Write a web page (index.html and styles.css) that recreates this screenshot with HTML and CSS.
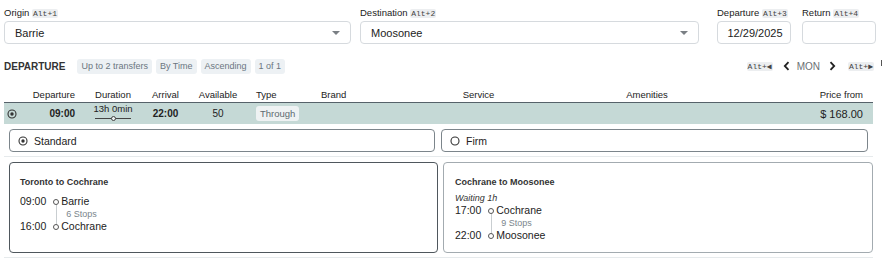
FILE: index.html
```html
<!DOCTYPE html>
<html lang="en">
<head>
    <meta charset="UTF-8">
    <title>Departure</title>
    <link rel="stylesheet" href="styles.css">
</head>
<body>
<div class="page">
    <div class="search">
        <div class="field f_origin">
            <label>Origin <kbd>Alt+1</kbd></label>
            <div class="box">Barrie<span class="caret"></span></div>
        </div>
        <div class="field f_dest">
            <label>Destination <kbd>Alt+2</kbd></label>
            <div class="box">Moosonee<span class="caret"></span></div>
        </div>
        <div class="field f_dep">
            <label>Departure <kbd>Alt+3</kbd></label>
            <div class="box date">12/29/2025</div>
        </div>
        <div class="field f_ret">
            <label>Return <kbd>Alt+4</kbd></label>
            <div class="box date"></div>
        </div>
    </div>

    <div class="toolbar">
        <span class="title">DEPARTURE</span>
        <span class="chip">Up to 2 transfers</span>
        <span class="chip">By Time</span>
        <span class="chip">Ascending</span>
        <span class="chip">1 of 1</span>
        <div class="nav">
            <kbd>Alt+◀</kbd>
            <svg class="chev prev" width="7" height="10" viewBox="0 0 7 10"><polyline points="5.5,1.2 1.8,5 5.5,8.8" fill="none" stroke="#222" stroke-width="1.8"/></svg>
            <span class="day">MON</span>
            <svg class="chev next" width="7" height="10" viewBox="0 0 7 10"><polyline points="1.5,1.2 5.2,5 1.5,8.8" fill="none" stroke="#222" stroke-width="1.8"/></svg>
            <kbd>Alt+▶</kbd>
        </div>
        <span class="tick"></span>
    </div>

    <div class="table">
        <div class="thead">
            <span></span>
            <span class="r">Departure</span>
            <span class="c">Duration</span>
            <span class="c">Arrival</span>
            <span class="c">Available</span>
            <span class="l">Type</span>
            <span class="l2">Brand</span>
            <span class="c">Service</span>
            <span class="c">Amenities</span>
            <span class="p">Price from</span>
        </div>
        <div class="trow">
            <span class="radio_cell">
                <svg width="10" height="10" viewBox="0 0 10 10"><circle cx="5" cy="5" r="4" fill="none" stroke="#333" stroke-width="1.1"/><circle cx="5" cy="5" r="1.7" fill="#333"/></svg>
            </span>
            <span class="r bold">09:00</span>
            <span class="dur">
                <span>13h 0min</span>
                <i class="dur_line"><b></b></i>
            </span>
            <span class="c bold">22:00</span>
            <span class="c">50</span>
            <span class="l"><span class="tag">Through</span></span>
            <span></span>
            <span></span>
            <span></span>
            <span class="p price">$ 168.00</span>
        </div>
    </div>

    <div class="options">
        <div class="opt opt_a">
            <svg width="10" height="10" viewBox="0 0 10 10"><circle cx="5" cy="5" r="4" fill="none" stroke="#333" stroke-width="1.1"/><circle cx="5" cy="5" r="1.7" fill="#333"/></svg>
            Standard
        </div>
        <div class="opt opt_b">
            <svg width="10" height="10" viewBox="0 0 10 10"><circle cx="5" cy="5" r="4" fill="none" stroke="#333" stroke-width="1.1"/></svg>
            Firm
        </div>
    </div>
    <div class="rule"></div>

    <div class="cards">
        <div class="card card_sel">
            <div class="card_title">Toronto to Cochrane</div>
            <div class="tl first">
                <span class="t">09:00</span><span class="mk mk_start"><b></b></span><span class="n">Barrie</span>
                <span></span><span class="mk mk_mid"></span><span class="stops">6 Stops</span>
                <span class="t">16:00</span><span class="mk mk_end"><b></b></span><span class="n">Cochrane</span>
            </div>
        </div>
        <div class="card card_b">
            <div class="card_title">Cochrane to Moosonee</div>
            <div class="wait">Waiting 1h</div>
            <div class="tl">
                <span class="t">17:00</span><span class="mk mk_start"><b></b></span><span class="n">Cochrane</span>
                <span></span><span class="mk mk_mid"></span><span class="stops">9 Stops</span>
                <span class="t">22:00</span><span class="mk mk_end"><b></b></span><span class="n">Moosonee</span>
            </div>
        </div>
    </div>
    <div class="rule"></div>
</div>
</body>
</html>
```
FILE: styles.css
```css
body{
    margin: 0;
    font-family: "Liberation Sans", Arial, sans-serif;
    color: #222;
    background: #fff;
}
.page{
    padding-left: 4px;
}

kbd{
    font-family: "Liberation Mono", "DejaVu Sans Mono", monospace;
    font-size: 8px;
    background-color: #eceef0;
    color: #444;
    border-radius: 2px;
    padding: 0 1px;
}

/* search fields */
.search{
    display: flex;
    padding-top: 6px;
}
.field label{
    display: block;
    font-size: 9.5px;
    line-height: 13px;
    margin-bottom: 1px;
}
.f_origin{ width: 347px; }
.f_dest{ width: 339px; margin-left: 9px; }
.f_dep{ width: 74px; margin-left: 18px; }
.f_ret{ width: 74px; margin-left: 11px; }

.box{
    height: 23px;
    box-sizing: border-box;
    border: 1px solid #d6dade;
    border-radius: 4px;
    font-size: 11px;
    padding-left: 10px;
    display: flex;
    justify-content: space-between;
    align-items: center;
}
.box.date{
    justify-content: center;
    padding-left: 2px;
}
.caret{
    width: 0;
    height: 0;
    border-left: 4px solid transparent;
    border-right: 4px solid transparent;
    border-top: 4px solid #7a7f84;
    margin-right: 10px;
}

/* toolbar */
.toolbar{
    display: flex;
    align-items: center;
    width: 878px;
    height: 16px;
    margin-top: 14px;
}
.title{
    font-weight: bold;
    font-size: 10px;
    color: #333;
    margin-right: 12px;
}
.chip{
    font-size: 9px;
    line-height: 15px;
    padding: 0 4px;
    background-color: #edf1f4;
    color: #6b7681;
    border-radius: 3px;
    margin-right: 4px;
}
.nav{
    margin-left: auto;
    display: flex;
    align-items: center;
}
.nav .prev{ margin-left: 10px; }
.nav .day{
    font-size: 10px;
    color: #6a6f74;
    margin: 0 9px 0 7px;
}
.nav .next{ margin-right: 12px; }
.tick{
    width: 1px;
    height: 6px;
    margin: -6px 0 0 7px;
    background-color: #555;
}

/* table */
.table{
    width: 869px;
    margin-top: 12px;
}
.thead, .trow{
    display: grid;
    grid-template-columns: 24px 52px 66px 39px 66px 60px 89px 157px 180px 136px;
    align-items: center;
}
.thead{
    height: 16px;
    border-bottom: 1px solid #56626a;
    font-size: 9.5px;
}
.trow{
    height: 21px;
    background-color: #c5d9d6;
    font-size: 10px;
}
.r{ text-align: right; padding-right: 5px; }
.c{ text-align: center; }
.l{ padding-left: 5px; }
.l2{ padding-left: 10px; }
.p{ text-align: right; padding-right: 10px; }
.bold{ font-weight: bold; }
.price{ font-size: 11px; }

.radio_cell{
    display: flex;
    padding-left: 3px;
}
.dur{
    align-self: stretch;
    display: flex;
    flex-direction: column;
    align-items: center;
    font-size: 9.5px;
}
.dur span{
    line-height: 10px;
    margin-top: 1px;
}
.dur_line{
    width: 36px;
    height: 1px;
    margin-top: 4px;
    background-color: #444;
    display: flex;
    justify-content: center;
    align-items: center;
}
.dur_line b{
    width: 3px;
    height: 3px;
    border: 1px solid #444;
    border-radius: 50%;
    background-color: #eef3f2;
}
.tag{
    display: inline-block;
    font-size: 9.5px;
    line-height: 15px;
    padding: 0 4px;
    background-color: #eef2f3;
    color: #5d6a71;
    border-radius: 3px;
}

/* fare options */
.options{
    display: flex;
    gap: 6px;
    margin-top: 5px;
    padding-left: 5px;
}
.opt{
    height: 23px;
    box-sizing: border-box;
    border: 1px solid #7c858b;
    border-radius: 4px;
    display: flex;
    align-items: center;
    gap: 6px;
    padding-left: 8px;
    font-size: 10.5px;
}
.opt_a{ width: 426px; }
.opt_b{ width: 427px; }

.rule{
    width: 869px;
    height: 1px;
    margin-top: 4px;
    background-color: #e6eaec;
}

/* cards */
.cards{
    display: flex;
    gap: 5px;
    margin-top: 5px;
    padding-left: 5px;
}
.card{
    height: 91px;
    box-sizing: border-box;
    border-radius: 4px;
    padding: 13px 10px;
}
.card_sel{
    width: 429px;
    border: 1.5px solid #4f575d;
}
.card_b{
    width: 430px;
    border: 1px solid #a3abb0;
    padding-left: 11px;
}
.card_title{
    font-size: 9px;
    font-weight: bold;
    line-height: 12px;
    color: #333;
}
.wait{
    font-size: 9px;
    font-style: italic;
    line-height: 12px;
    margin-top: 4px;
    color: #333;
}
.tl{
    display: grid;
    grid-template-columns: auto 6px auto;
    justify-content: start;
    font-size: 10.5px;
}
.tl.first{
    margin-top: 7px;
}
.tl .t{
    line-height: 13px;
    padding-right: 7px;
}
.tl .n{
    line-height: 13px;
    padding-left: 2px;
}
.tl .stops{
    line-height: 12px;
    font-size: 9px;
    color: #7a858c;
    padding-left: 7px;
}
.mk{
    display: flex;
    align-items: center;
    justify-content: center;
    align-self: stretch;
    background-image: linear-gradient(#c9ced1, #c9ced1);
    background-repeat: no-repeat;
}
.mk_start{
    background-size: 1px 50%;
    background-position: center bottom;
}
.mk_mid{
    background-size: 1px 100%;
    background-position: center;
}
.mk_end{
    background-size: 1px 50%;
    background-position: center top;
}
.mk b{
    width: 4px;
    height: 4px;
    border: 1px solid #555;
    border-radius: 50%;
    background-color: #fff;
}
```
